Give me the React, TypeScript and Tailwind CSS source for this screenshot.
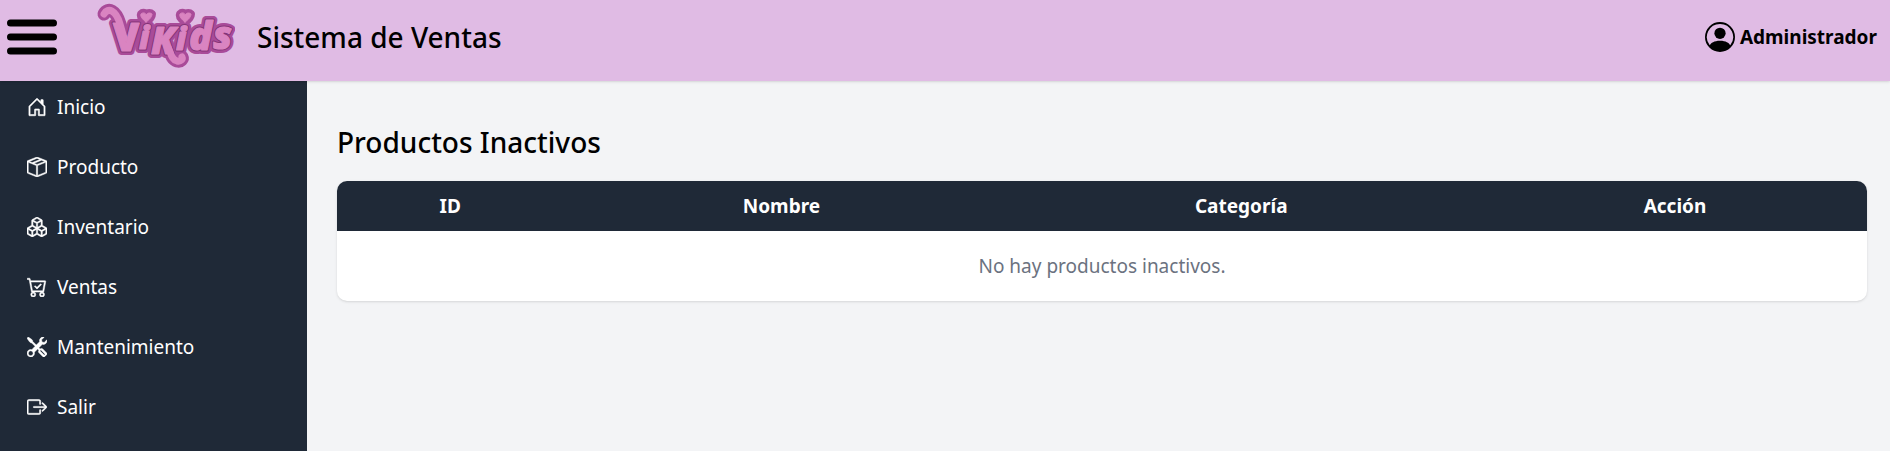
import type { IconType } from "react-icons";
import {
  BsBoxArrowRight,
  BsBoxSeam,
  BsBoxes,
  BsCartCheck,
  BsHouseDoor,
  BsPersonCircle,
  BsTools,
} from "react-icons/bs";

const menu: { label: string; icon: IconType }[] = [
  { label: "Inicio", icon: BsHouseDoor },
  { label: "Producto", icon: BsBoxSeam },
  { label: "Inventario", icon: BsBoxes },
  { label: "Ventas", icon: BsCartCheck },
  { label: "Mantenimiento", icon: BsTools },
  { label: "Salir", icon: BsBoxArrowRight },
];

function Lettering() {
  return (
    <text fontFamily="'Open Sans', 'Noto Sans', sans-serif" fontWeight="800">
      <tspan x="18" y="49" fontSize="38">V</tspan>
      <tspan x="44" y="47" fontSize="32" fontStyle="italic">i</tspan>
      <tspan x="56" y="52" fontSize="37" fontStyle="italic">K</tspan>
      <tspan x="81" y="48" fontSize="32" fontStyle="italic">i</tspan>
      <tspan x="94" y="48" fontSize="38" fontStyle="italic">d</tspan>
      <tspan x="118" y="47" fontSize="38" fontStyle="italic">s</tspan>
    </text>
  );
}

const swashes = "M9 12C13 5 21 8 25 22L29 36M72 44C76 48 75 57 82 59C86 60 88 57 87 55";
const hearts =
  "M51 20C47 17 45 14 46 12C48 10 51 11 51 13C53 10 56 11 57 12C57 15 54 18 51 20ZM90 20C86 17 84 14 85 12C87 10 90 11 90 13C92 10 95 11 96 12C96 15 93 18 90 20Z";

function Logo() {
  return (
    <svg viewBox="0 0 140 70" className="h-[70px] w-[140px]" role="img" aria-label="ViKids">
      <g fill="#a94b99" stroke="#a94b99" strokeLinecap="round" strokeLinejoin="round">
        <path d={swashes} fill="none" strokeWidth="13" />
        <path d={hearts} strokeWidth="8" />
        <g strokeWidth="8">
          <Lettering />
        </g>
      </g>
      <g fill="#843577" stroke="#843577" strokeWidth="3" strokeLinecap="round" strokeLinejoin="round">
        <Lettering />
      </g>
      <g fill="#da84c1" stroke="#da84c1" strokeLinecap="round" strokeLinejoin="round">
        <path d={swashes} fill="none" strokeWidth="7" />
        <path d={hearts} strokeWidth="1" />
        <g strokeWidth="1">
          <Lettering />
        </g>
      </g>
    </svg>
  );
}

export default function App() {
  return (
    <div className="flex min-h-screen flex-col bg-[#f3f4f6] font-['Noto_Sans','Open_Sans',sans-serif] text-[19px] leading-[30px] text-black">
      <header className="relative z-10 flex h-[81px] items-center justify-between bg-[#e0bbe4] pb-2 pr-[13px] pl-[7px] shadow-sm">
        <div className="flex items-center">
          <button type="button" aria-label="Menú" className="mr-[38px]">
            <svg viewBox="0 0 50 36" className="h-9 w-[50px]">
              <path d="M3.5 4h43M3.5 18h43M3.5 32h43" stroke="#000" strokeWidth="7" strokeLinecap="round" />
            </svg>
          </button>
          <Logo />
          <span className="ml-[22px] text-[28px] font-medium">Sistema de Ventas</span>
        </div>
        <div className="flex items-center gap-[5px] font-bold">
          <BsPersonCircle size={30} />
          Administrador
        </div>
      </header>

      <div className="flex flex-1">
        <nav className="w-[307px] shrink-0 bg-[#1f2937] text-white">
          <ul>
            {menu.map(({ label, icon: Icon }) => (
              <li key={label}>
                <a href="#" className="flex h-[60px] items-center gap-[10px] px-[27px] pb-2">
                  <Icon size={20} className="[stroke-width:0.4]" />
                  {label}
                </a>
              </li>
            ))}
          </ul>
        </nav>

        <main className="flex-1 pt-[43px] pr-[23px] pl-[30px]">
          <h2 className="mb-[21px] text-[28px] leading-9 font-medium">Productos Inactivos</h2>
          <div className="overflow-hidden rounded-[10px] bg-white shadow">
            <table className="w-full table-fixed text-center">
              <thead className="bg-[#1f2937] text-white">
                <tr>
                  <th className="w-[14.8%] py-[10px] font-bold">ID</th>
                  <th className="w-[28.5%] py-[10px] font-bold">Nombre</th>
                  <th className="w-[31.6%] py-[10px] font-bold">Categoría</th>
                  <th className="w-[25.1%] py-[10px] font-bold">Acción</th>
                </tr>
              </thead>
              <tbody>
                <tr>
                  <td colSpan={4} className="py-5 text-[#6b7280]">No hay productos inactivos.</td>
                </tr>
              </tbody>
            </table>
          </div>
        </main>
      </div>
    </div>
  );
}
